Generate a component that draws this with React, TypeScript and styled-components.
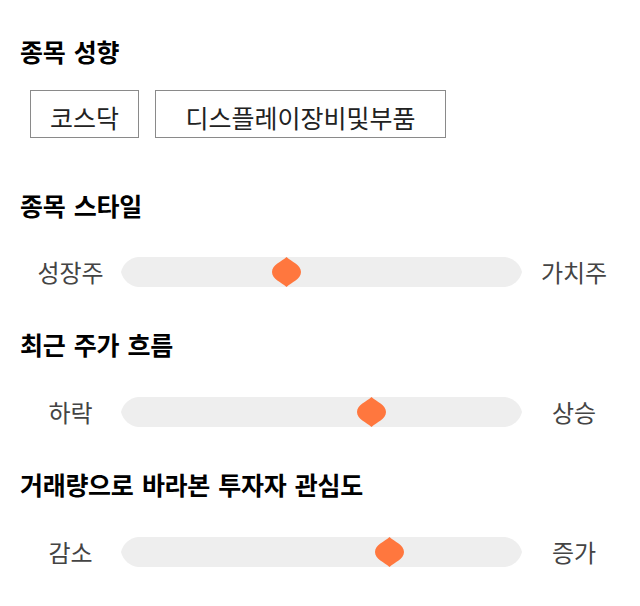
import React from "react";
import styled, { createGlobalStyle } from "styled-components";

const GlobalStyle = createGlobalStyle`
  html, body { margin: 0; padding: 0; background: #ffffff; }
  body { font-family: "Noto Sans CJK KR", "Noto Sans", sans-serif; }
`;

const Page = styled.div`
  width: 640px;
  box-sizing: border-box;
  padding: 36px 16px 0 20px;
  display: flex;
  flex-direction: column;
`;

const Section = styled.section<{ $top: number; $gap: number }>`
  display: flex;
  flex-direction: column;
  gap: ${(p) => p.$gap}px;
  margin-top: ${(p) => p.$top}px;
`;

const Title = styled.h2`
  margin: 0;
  font-size: 25px;
  line-height: 30px;
  font-weight: 700;
  color: #000;
  letter-spacing: -0.3px;
  word-spacing: 3px;
`;

const ChipRow = styled.div`
  display: flex;
  gap: 16px;
  padding-left: 10px;
`;

const Chip = styled.div<{ $width: number }>`
  box-sizing: border-box;
  width: ${(p) => p.$width}px;
  height: 48px;
  border: 1px solid #8a8a8a;
  padding-top: 11px;
  font-size: 25px;
  line-height: 30px;
  color: #222;
  text-align: center;
  white-space: nowrap;
`;

const SliderRow = styled.div`
  display: grid;
  grid-template-columns: 101px 401px 104px;
  align-items: center;
  height: 30px;
`;

const Label = styled.span`
  font-size: 24px;
  line-height: 30px;
  color: #444;
  text-align: center;
`;

const Track = styled.div`
  position: relative;
  width: 401px;
  height: 30px;
`;

const TrackShape = styled.div`
  width: 401px;
  height: 30px;
  background: #eeeeee;
  clip-path: path("M17 0 H384 A20 20 0 0 1 401 15 A20 20 0 0 1 384 30 H17 A20 20 0 0 1 0 15 A20 20 0 0 1 17 0 Z");
`;

const Thumb = styled.svg`
  position: absolute;
  top: 0;
  width: 29px;
  height: 30px;
  margin-left: -14.5px;
`;

function Slider({ left, right, pos }: { left: string; right: string; pos: number }) {
  return (
    <SliderRow>
      <Label>{left}</Label>
      <Track>
        <TrackShape />
        <Thumb viewBox="0 0 29 30" style={{ left: `${pos}px` }}>
          <path
            d="M14.5 0 C19.5 4.5 29 8 29 15 C29 22 19.5 25.5 14.5 30 C9.5 25.5 0 22 0 15 C0 8 9.5 4.5 14.5 0 Z"
            fill="#ff773e"
          />
        </Thumb>
      </Track>
      <Label>{right}</Label>
    </SliderRow>
  );
}

export default function App() {
  return (
    <>
      <GlobalStyle />
      <Page>
        <Section $top={0} $gap={24}>
          <Title>종목 성향</Title>
          <ChipRow>
            <Chip $width={109}>코스닥</Chip>
            <Chip $width={291}>디스플레이장비및부품</Chip>
          </ChipRow>
        </Section>
        <Section $top={52} $gap={37}>
          <Title>종목 스타일</Title>
          <Slider left="성장주" right="가치주" pos={165} />
        </Section>
        <Section $top={42} $gap={38}>
          <Title>최근 주가 흐름</Title>
          <Slider left="하락" right="상승" pos={250} />
        </Section>
        <Section $top={42} $gap={38}>
          <Title>거래량으로 바라본 투자자 관심도</Title>
          <Slider left="감소" right="증가" pos={268} />
        </Section>
      </Page>
    </>
  );
}
